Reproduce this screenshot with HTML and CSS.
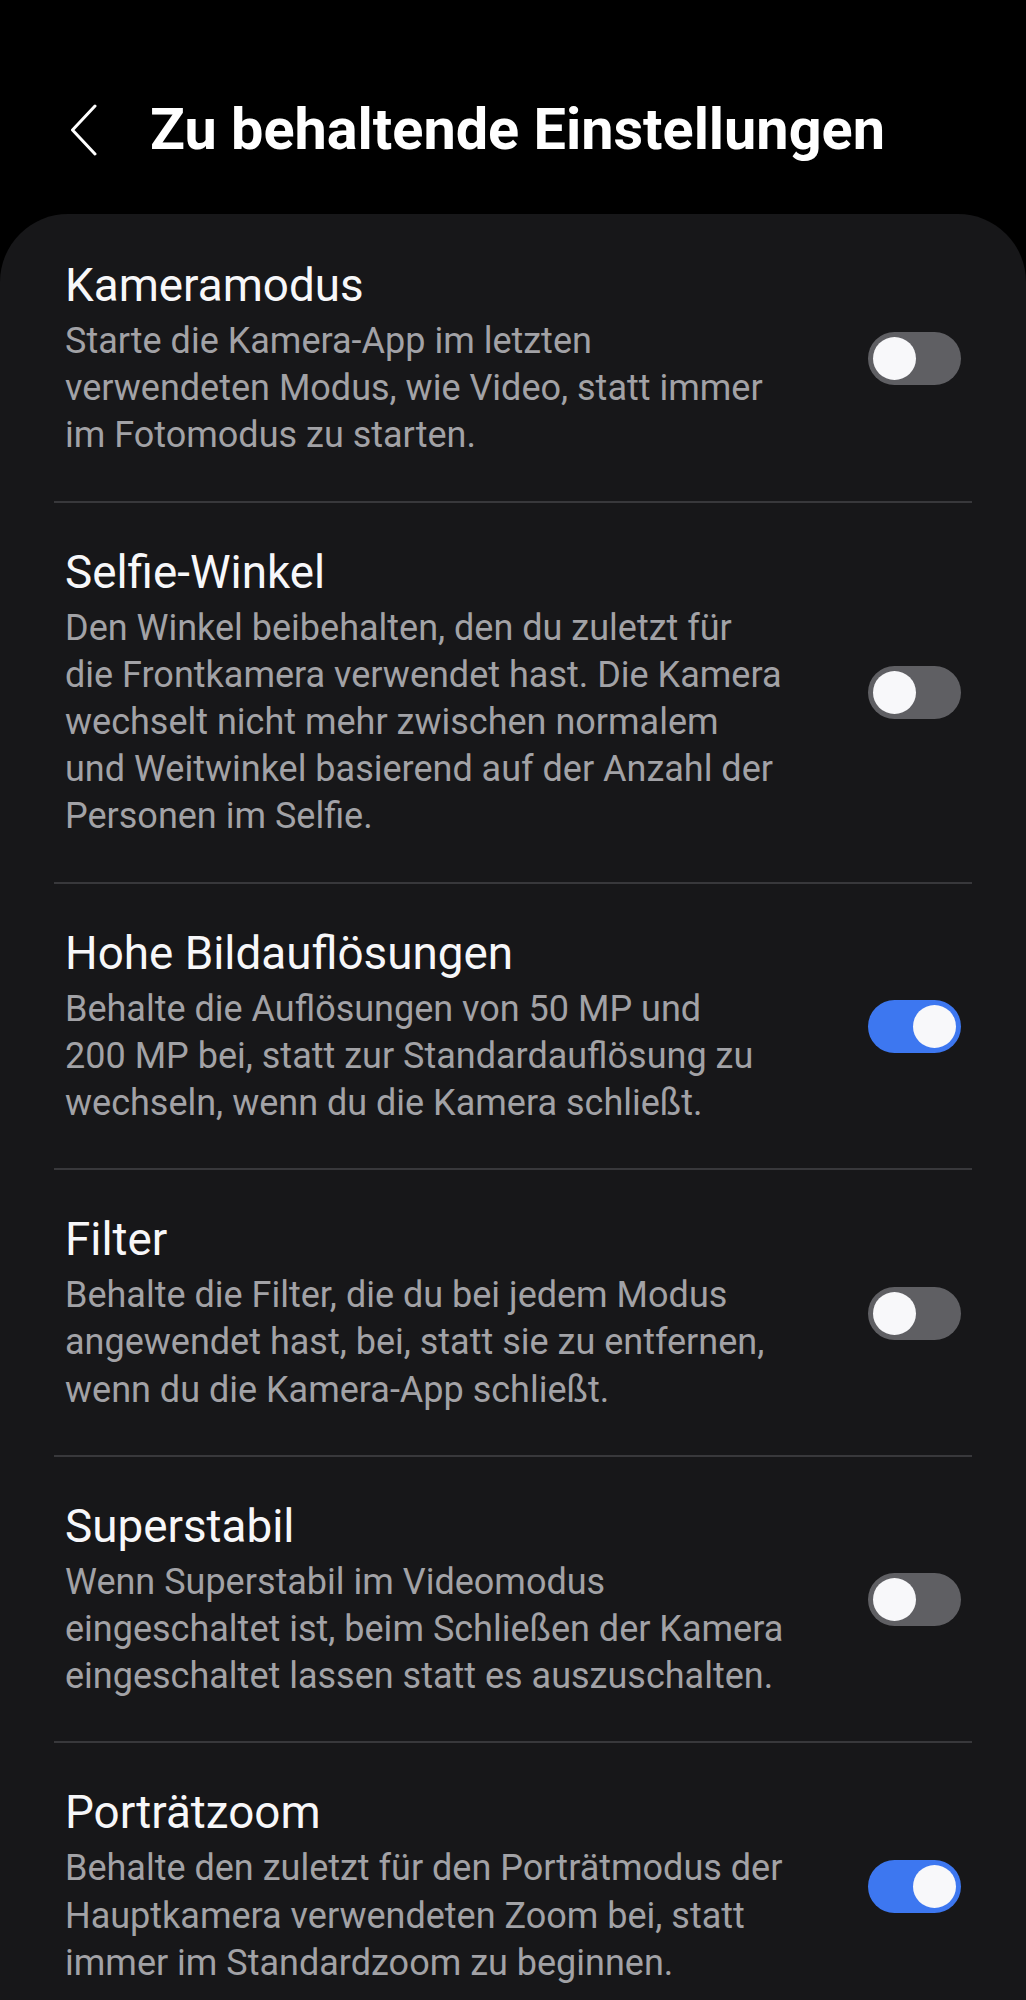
FILE: index.html
```html
<!DOCTYPE html>
<html lang="de">
<head>
<meta charset="utf-8">
<title>Zu behaltende Einstellungen</title>
<link rel="stylesheet" href="styles.css">
</head>
<body>
<header class="topbar">
  <svg class="back" width="28" height="52" viewBox="0 0 28 52" aria-hidden="true">
    <path d="M25 2 L2.5 26 L25 50" fill="none" stroke="#ffffff" stroke-width="3" stroke-linecap="round" stroke-linejoin="round"/>
  </svg>
  <h1 class="page-title">Zu behaltende Einstellungen</h1>
</header>
<main class="card">
  <div class="item first">
    <div class="text">
      <div class="title">Kameramodus</div>
      <div class="desc">Starte die Kamera-App im letzten<br>verwendeten Modus, wie Video, statt immer<br>im Fotomodus zu starten.</div>
    </div>
    <div class="switch"><span class="knob"></span></div>
  </div>
  <div class="item">
    <div class="text">
      <div class="title">Selfie-Winkel</div>
      <div class="desc">Den Winkel beibehalten, den du zuletzt für<br>die Frontkamera verwendet hast. Die Kamera<br>wechselt nicht mehr zwischen normalem<br>und Weitwinkel basierend auf der Anzahl der<br>Personen im Selfie.</div>
    </div>
    <div class="switch"><span class="knob"></span></div>
  </div>
  <div class="item">
    <div class="text">
      <div class="title">Hohe Bildauflösungen</div>
      <div class="desc">Behalte die Auflösungen von 50 MP und<br>200 MP bei, statt zur Standardauflösung zu<br>wechseln, wenn du die Kamera schließt.</div>
    </div>
    <div class="switch on"><span class="knob"></span></div>
  </div>
  <div class="item">
    <div class="text">
      <div class="title">Filter</div>
      <div class="desc">Behalte die Filter, die du bei jedem Modus<br>angewendet hast, bei, statt sie zu entfernen,<br>wenn du die Kamera-App schließt.</div>
    </div>
    <div class="switch"><span class="knob"></span></div>
  </div>
  <div class="item">
    <div class="text">
      <div class="title">Superstabil</div>
      <div class="desc">Wenn Superstabil im Videomodus<br>eingeschaltet ist, beim Schließen der Kamera<br>eingeschaltet lassen statt es auszuschalten.</div>
    </div>
    <div class="switch"><span class="knob"></span></div>
  </div>
  <div class="item last">
    <div class="text">
      <div class="title">Porträtzoom</div>
      <div class="desc">Behalte den zuletzt für den Porträtmodus der<br>Hauptkamera verwendeten Zoom bei, statt<br>immer im Standardzoom zu beginnen.</div>
    </div>
    <div class="switch on"><span class="knob"></span></div>
  </div>
</main>
</body>
</html>
```
FILE: styles.css
```css
* {
  box-sizing: border-box;
}

html, body {
  margin: 0;
  padding: 0;
  background: #000000;
}

body {
  font-family: Roboto, "Noto Sans", "Liberation Sans", sans-serif;
  color: #f7f7f9;
  width: 1026px;
  min-height: 2000px;
}

.topbar {
  display: flex;
  align-items: center;
  height: 100px;
  margin: 80px 0 34px 0;
  padding-left: 70px;
  gap: 52px;
}

.back {
  display: block;
  flex: none;
}

.page-title {
  margin: 0;
  font-size: 57.6px;
  line-height: 1;
  font-weight: 700;
  letter-spacing: 0;
  color: #ffffff;
}

.card {
  background: #171719;
  border-radius: 68px 68px 0 0;
  padding: 0 54px;
  min-height: 1786px;
}

.item {
  display: flex;
  align-items: center;
  justify-content: space-between;
  padding: 42px 11px 41px 11px;
  border-bottom: 2px solid #38383b;
}

.item.first {
  padding-top: 44px;
}

.item.last {
  border-bottom: none;
}

.text {
  flex: 1;
  min-width: 0;
}

.title {
  font-size: 45.8px;
  line-height: 56px;
  font-weight: 400;
  color: #f7f7f9;
  white-space: nowrap;
}

.desc {
  margin-top: 4px;
  font-size: 36px;
  line-height: 47.2px;
  color: #a2a2a6;
  white-space: nowrap;
}

.switch {
  position: relative;
  flex: none;
  width: 93px;
  height: 53px;
  border-radius: 27px;
  background: #5f5f63;
}

.switch .knob {
  position: absolute;
  top: 5px;
  left: 5px;
  width: 43px;
  height: 43px;
  border-radius: 50%;
  background: #f8f8fa;
}

.switch.on {
  background: #3d77f0;
}

.switch.on .knob {
  left: auto;
  right: 5px;
}
```
